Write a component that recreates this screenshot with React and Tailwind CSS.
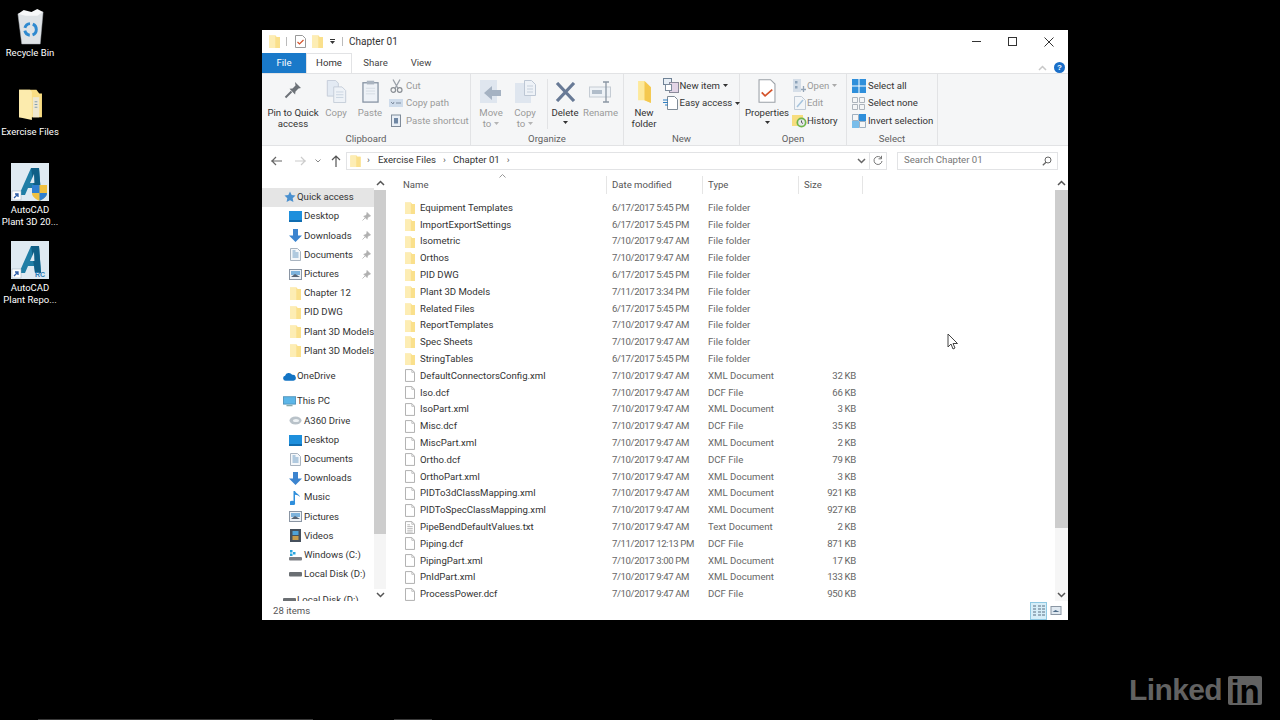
import React from "react";

const Folder = ({ s = 11, h = 13 }) => (
  <svg width={s} height={h} viewBox="0 0 11 13" className="shrink-0">
    <path d="M0 0.5h6.5l1 1.5H11v11H0z" fill="#fbe291" />
    <path d="M0 0.5h6.5V13H0z" fill="#fdedb4" />
    <path d="M6.5 0.5l1 1.5H11v11H6.5z" fill="#fae08c" />
  </svg>
);

const FileIc = ({ lines }) => (
  <svg width="10" height="13" viewBox="0 0 11 14" className="shrink-0">
    <path d="M0.5 0.5h7l3 3v10h-10z" fill="#fff" stroke="#a8a8a8" />
    <path d="M7.5 0.5v3h3" fill="none" stroke="#bbb" />
    {lines && <path d="M2.5 4h3M2.5 6h6M2.5 8h6M2.5 10h6M2.5 12h6" stroke="#b5b5b5" />}
  </svg>
);

const Pin = () => (
  <svg width="9" height="9" viewBox="0 0 9 9" className="shrink-0">
    <path d="M5 0.5l3.5 3.5-1.5.4-1.6 1.6-.3 1.5L1.8 4.2l1.5-.3L4.9 2.3z M3 6l-2.5 2.5" fill="#b0b0b0" stroke="#b0b0b0" strokeWidth="0.8" />
  </svg>
);

const navIcons = {
  star: (
    <svg width="12" height="12" viewBox="0 0 13 13"><path d="M6.5.5l1.8 3.9 4.2.5-3.1 2.9.8 4.2-3.7-2.1-3.7 2.1.8-4.2L.5 4.9l4.2-.5z" fill="#4a90cf" /></svg>
  ),
  desktop: (
    <svg width="13" height="11" viewBox="0 0 13 11"><rect width="13" height="9.5" fill="#1e8fdc" /><rect y="9" width="13" height="2" fill="#0f6cb0" /></svg>
  ),
  down: (
    <svg width="13" height="13" viewBox="0 0 13 13"><path d="M4 0h5v6.5h4L6.5 13 0 6.5h4z" fill="#3c84cf" /></svg>
  ),
  docs: (
    <svg width="11" height="13" viewBox="0 0 11 13"><path d="M.5.5h7l3 3v9H.5z" fill="#f4f7fa" stroke="#a9b4c0" /><path d="M2.5 3h3M2.5 5h6M2.5 7h6M2.5 9h6" stroke="#6c9cc4" /></svg>
  ),
  pics: (
    <svg width="13" height="11" viewBox="0 0 13 11"><rect x=".5" y=".5" width="12" height="10" fill="#eef2f6" stroke="#8a95a3" /><path d="M2 2h9v4H2z" fill="#7db3dc" /><path d="M2 8l4-3 5 3z" fill="#556373" /></svg>
  ),
  cloud: (
    <svg width="13" height="9" viewBox="0 0 15 10"><path d="M3 10a3 3 0 0 1-.6-5.9A4.5 4.5 0 0 1 10.5 3 3.5 3.5 0 0 1 12 10z" fill="#1374c4" /></svg>
  ),
  pc: (
    <svg width="13" height="11" viewBox="0 0 15 12"><rect x=".5" y=".5" width="14" height="8.5" fill="#5cb6e8" stroke="#4d8fb8" /><rect x="4" y="10" width="7" height="1.5" fill="#8aa" /></svg>
  ),
  a360: (
    <svg width="13" height="9" viewBox="0 0 13 9"><ellipse cx="6.5" cy="4.5" rx="6" ry="4" fill="#b9c2c9" /><ellipse cx="7" cy="4.5" rx="3" ry="1.6" fill="#eef2f5" /></svg>
  ),
  music: (
    <svg width="11" height="14" viewBox="0 0 11 14"><path d="M3.5 0h1.5c.5 2.5 4.5 3 5 6-1.500-1.500-3-2-5-2.200V11.500A3 2.500 0 1 1 3.500 10z" fill="#2f8fdc" /></svg>
  ),
  video: (
    <svg width="11" height="13" viewBox="0 0 11 13"><rect width="11" height="13" fill="#46505c" /><rect x="2.500" y="2" width="6" height="4" fill="#4ea2d8" /><rect x="2.500" y="7" width="6" height="4" fill="#c79b4a" /></svg>
  ),
  win: (
    <svg width="13" height="11" viewBox="0 0 13 11"><rect y="7" width="13" height="3.500" rx="1" fill="#7c7f84" /><rect x="1" width="2.500" height="2.500" fill="#27a5df" /><rect x="4" y="2" width="2.500" height="2.500" fill="#27a5df" /><rect x="1" y="3.500" width="2.500" height="2.500" fill="#27a5df" /></svg>
  ),
  disk: (
    <svg width="13" height="6" viewBox="0 0 13 6"><rect y="1" width="13" height="4.500" rx="1" fill="#6b6f73" /></svg>
  ),
};

function NavRow({ icon, label, pin, top, sel }) {
  return (
    <div className={`flex h-[19.2px] items-center shrink-0 ${top ? "pl-[20px] mt-[6.2px]" : "pl-[25px]"} ${sel ? "bg-[#e5e5e5] !mt-[0.8px]" : ""}`}>
      <div className={`flex items-center justify-center shrink-0 ${top ? "w-[15px]" : "w-[17px]"}`}>{icon}</div>
      <span className="flex-1 whitespace-nowrap text-[#333]">{label}</span>
      {pin && <span className="mr-[3px]"><Pin /></span>}
    </div>
  );
}

const files = [
  ["Equipment Templates", "6/17/2017 5:45 PM", "File folder", "", "f"],
  ["ImportExportSettings", "6/17/2017 5:45 PM", "File folder", "", "f"],
  ["Isometric", "7/10/2017 9:47 AM", "File folder", "", "f"],
  ["Orthos", "7/10/2017 9:47 AM", "File folder", "", "f"],
  ["PID DWG", "6/17/2017 5:45 PM", "File folder", "", "f"],
  ["Plant 3D Models", "7/11/2017 3:34 PM", "File folder", "", "f"],
  ["Related Files", "6/17/2017 5:45 PM", "File folder", "", "f"],
  ["ReportTemplates", "7/10/2017 9:47 AM", "File folder", "", "f"],
  ["Spec Sheets", "7/10/2017 9:47 AM", "File folder", "", "f"],
  ["StringTables", "6/17/2017 5:45 PM", "File folder", "", "f"],
  ["DefaultConnectorsConfig.xml", "7/10/2017 9:47 AM", "XML Document", "32 KB"],
  ["Iso.dcf", "7/10/2017 9:47 AM", "DCF File", "66 KB"],
  ["IsoPart.xml", "7/10/2017 9:47 AM", "XML Document", "3 KB"],
  ["Misc.dcf", "7/10/2017 9:47 AM", "DCF File", "35 KB"],
  ["MiscPart.xml", "7/10/2017 9:47 AM", "XML Document", "2 KB"],
  ["Ortho.dcf", "7/10/2017 9:47 AM", "DCF File", "79 KB"],
  ["OrthoPart.xml", "7/10/2017 9:47 AM", "XML Document", "3 KB"],
  ["PIDTo3dClassMapping.xml", "7/10/2017 9:47 AM", "XML Document", "921 KB"],
  ["PIDToSpecClassMapping.xml", "7/10/2017 9:47 AM", "XML Document", "927 KB"],
  ["PipeBendDefaultValues.txt", "7/10/2017 9:47 AM", "Text Document", "2 KB", "t"],
  ["Piping.dcf", "7/11/2017 12:13 PM", "DCF File", "871 KB"],
  ["PipingPart.xml", "7/10/2017 3:00 PM", "XML Document", "17 KB"],
  ["PnIdPart.xml", "7/10/2017 9:47 AM", "XML Document", "133 KB"],
  ["ProcessPower.dcf", "7/10/2017 9:47 AM", "DCF File", "950 KB"],
];

const Chevron = ({ up, color = "#444" }) => (
  <svg width="9" height="6" viewBox="0 0 9 6">
    <path d={up ? "M1 5l3.500-3.500L8 5" : "M1 1l3.500 3.500L8 1"} fill="none" stroke={color} strokeWidth="1.500" />
  </svg>
);

const Caret = ({ c = "#333" }) => (
  <svg width="5" height="3" viewBox="0 0 5 3" className="inline-block"><path d="M0 0h5L2.500 3z" fill={c} /></svg>
);

function Large({ w, icon, l1, l2, caret, dim, ml }) {
  return (
    <div className={`flex flex-col items-center shrink-0 ${ml || ""}`} style={{ width: w }}>
      <div className="h-[24px] mt-[5px] flex items-end justify-center">{icon}</div>
      <div className={`mt-[5px] leading-[10.500px] text-center whitespace-nowrap ${dim ? "text-[#9a9a9a]" : "text-[#333]"}`}>
        <div>{l1}</div>
        {l2 && <div>{l2}</div>}
        {caret && <div className="leading-[8px]"><Caret /></div>}
      </div>
    </div>
  );
}

function Small({ icon, label, dim, caret, tx = 1.5 }) {
  return (
    <div className={`flex items-center h-[17.500px] whitespace-nowrap ${dim ? "text-[#9a9a9a]" : "text-[#333]"}`}>
      <span className="w-[17px] flex items-center justify-center shrink-0">{icon}</span>
      <span style={{ marginLeft: tx }}>{label}</span>
      {caret && <span className="ml-[3px] flex items-center"><Caret c={dim ? "#aaa" : "#333"} /></span>}
    </div>
  );
}

function Group({ w, label, children }) {
  return (
    <div className="flex flex-col h-full border-r border-[#e2e3e5] shrink-0" style={{ width: w }}>
      <div className="flex flex-1 min-h-0">{children}</div>
      <div className="h-[13px] leading-[13px] text-center text-[#5f5f5f]">{label}</div>
    </div>
  );
}

const SmallCol = ({ children, cls }) => <div className={`flex flex-col pt-[3px] ${cls || ""}`}>{children}</div>;

const DimTo = () => (
  <span className="inline-flex items-center gap-[3px]">to <Caret c="#b5b5b5" /></span>
);

const I = {
  pin: <svg width="18" height="18" viewBox="0 0 18 18" className="mb-[4px]"><path d="M11 1l6 6-2.500.6-3 3-.4 3L5.500 7.800l3-.4 3-3z" fill="#6d7278" /><path d="M7.500 10.500L1.500 16.500" stroke="#6d7278" strokeWidth="2" /></svg>,
  copy: <svg width="21" height="23" viewBox="0 0 21 25"><path d="M.5.5h9l3 3v14H.5z" fill="#e3eaf3" stroke="#c3ccd8" /><path d="M7.500 7.500h9l4 4v13h-13z" fill="#eef2f7" stroke="#c3ccd8" /><path d="M10 13h8M10 16h8M10 19h8" stroke="#c9d3df" /></svg>,
  paste: <svg width="17" height="23" viewBox="0 0 18 25"><rect x=".8" y="3" width="16.400" height="21" fill="#eef2f7" stroke="#8794a3" strokeWidth="1.400" /><rect x="5" y=".8" width="8" height="4" fill="#aab4c0" /><path d="M4 9h10M4 12h10M4 15h10" stroke="#d5dce4" /></svg>,
  cut: <svg width="13" height="14" viewBox="0 0 13 14"><path d="M3 .5l5 9M10 .5l-5 9" stroke="#9aa1a9" strokeWidth="1.300" /><circle cx="3.300" cy="11" r="2.300" fill="none" stroke="#8a8f95" strokeWidth="1.200" /><circle cx="9.700" cy="11" r="2.300" fill="none" stroke="#8a8f95" strokeWidth="1.200" /></svg>,
  copypath: <svg width="14" height="8" viewBox="0 0 14 8"><rect width="14" height="8" fill="#cfdceb" /><path d="M2 3l2 2 1-2M7 4h5" stroke="#7f8da0" strokeWidth="1" fill="none" /></svg>,
  pasteS: <svg width="10" height="13" viewBox="0 0 10 13"><rect x=".5" y="1" width="9" height="11.500" fill="#e9eff6" stroke="#7f8b99" /><rect x="3" y="4" width="4" height="5.500" fill="#6f87a4" /></svg>,
  move: <svg width="22" height="23" viewBox="0 0 22 23"><rect width="17" height="23" fill="#dfe6ef" /><path d="M21 10v6h-9v4l-8-7 8-7v4z" fill="#a5b2c2" /></svg>,
  copyto: <svg width="21" height="23" viewBox="0 0 21 23"><rect y="3" width="16" height="20" fill="#dfe6ef" /><path d="M9.500.5h7l4 4v11h-11z" fill="#eef2f7" stroke="#bdc7d4" /><path d="M12 6h6M12 9h6M12 12h6" stroke="#c6d0dc" /></svg>,
  del: <svg width="21" height="20" viewBox="0 0 21 20" className="mb-[1px]"><path d="M2 1l17 18M19 1L2 19" stroke="#687a96" strokeWidth="3.200" /></svg>,
  rename: <svg width="23" height="22" viewBox="0 0 23 22"><rect x="0.500" y="6" width="21" height="10" fill="#eef2f6" stroke="#c5ccd4" /><rect x="3" y="9" width="10" height="4" fill="#b1bdca" /><path d="M17 1v20M14 1h6M14 21h6" stroke="#8a96a4" strokeWidth="1.300" /></svg>,
  newf: <svg width="15" height="23" viewBox="0 0 16 25"><path d="M1 1h7l7 7v17l-7-3H1z" fill="#fde99c" /><path d="M8 1l7 7v17l-7-3z" fill="#f4c84f" /></svg>,
  newitem: <svg width="16" height="15" viewBox="0 0 16 15"><rect x=".5" y=".5" width="8" height="6" fill="#e8eff6" stroke="#6f8296" /><rect x="6.500" y="4.500" width="9" height="10" fill="#e2d4e6" stroke="#8a8a9a" /><rect x="2.500" y="6.500" width="6" height="6" fill="#fff" stroke="#7d8d9d" /></svg>,
  easy: <svg width="15" height="14" viewBox="0 0 15 14"><path d="M4.500.5h7l3 3v10h-10z" fill="#fff" stroke="#7f8b96" /><path d="M0 4h5M0 6.500h5M2 9h3" stroke="#2f7fc1" strokeWidth="1.200" /></svg>,
  props: <svg width="18" height="24" viewBox="0 0 18 25"><path d="M.7.7h12l4.600 4.600v19H.7z" fill="#fff" stroke="#9aa0a6" strokeWidth="1.100" /><path d="M3.500 14l3.500 3.500 7.500-6.500" fill="none" stroke="#d4532b" strokeWidth="1.800" /></svg>,
  open: <svg width="13" height="13" viewBox="0 0 13 13"><rect x="0" y="0" width="8" height="13" fill="#d5dee8" /><rect x="2" y="2" width="2.500" height="2.500" fill="#8ea4ba" /><rect x="2" y="7" width="2.500" height="2.500" fill="#8ea4ba" /><path d="M10.500 7v6M8 10.500h5" stroke="#93a4b6" strokeWidth="1.300" /></svg>,
  edit: <svg width="12" height="14" viewBox="0 0 12 14"><path d="M.5.5h7l4 4v9h-11z" fill="#f2f5f8" stroke="#c0cad5" /><path d="M3 11l6-7" stroke="#a6c4dd" strokeWidth="1.500" /></svg>,
  history: <svg width="15" height="14" viewBox="0 0 15 14"><rect y="1" width="11" height="11" fill="#f7dd7e" /><circle cx="9.500" cy="8.500" r="5" fill="#6fb54c" /><circle cx="9.500" cy="8.500" r="3.300" fill="#e4e7ea" /><path d="M9.500 6.500v2l1.500 1" stroke="#555" fill="none" /></svg>,
  selall: <svg width="14" height="14" viewBox="0 0 14 14"><rect width="14" height="14" fill="#2f8fdb" /><path d="M7 0v14M0 7h14" stroke="#fff" strokeWidth="1" /></svg>,
  selnone: <svg width="13" height="13" viewBox="0 0 13 13"><path d="M.5.5h5v5h-5zM7.500.5h5v5h-5zM.5 7.500h5v5h-5zM7.500 7.500h5v5h-5z" fill="none" stroke="#adb4bc" /></svg>,
  invert: <svg width="14" height="14" viewBox="0 0 14 14"><path d="M.5.5h6v6h-6zM7.500 7.500h6v6h-6z" fill="none" stroke="#9fb0c0" /><rect x="7" width="7" height="7" fill="#2f8fdb" /><rect y="7" width="7" height="7" fill="#79bdea" /></svg>,
};

const Tab = ({ label, w, active }) => (
  <div
    className={`flex items-center justify-center h-[20px] shrink-0 ${active ? "border-x border-t border-[#e2e3e5] text-[#333] relative z-10 bg-white" : "text-[#444]"}`}
    style={{ width: w }}
  >
    {label}
  </div>
);

function DeskIcon({ top, label, children }) {
  return (
    <div className="absolute left-0 w-[60px] flex flex-col items-center text-center text-white text-[9.500px] leading-[12px]" style={{ top }}>
      {children}
      {label.map((t) => (
        <span key={t} className="whitespace-nowrap">{t}</span>
      ))}
    </div>
  );
}

const AcadIcon = ({ rc }) => (
  <svg width="38" height="38" viewBox="0 0 38 38">
    <rect width="38" height="38" fill="#dfeaf2" />
    <path d="M8 32 L20 5 H28 L30 32 H24 L23.500 25 H17 L14 32z" fill="#1f7ea6" />
    <path d="M20 5 H28 L30 32 H24z" fill="#0f5f86" />
    <path d="M19 20 L23 11 L23.400 20z" fill="#dfeaf2" />
    <rect x="1" y="28" width="9" height="9" fill="#fff" stroke="#9ab" strokeWidth=".5" />
    <path d="M3 35l4-4M4 31h3v3" stroke="#2f5fa8" strokeWidth="1.300" fill="none" />
    {rc ? (
      <text x="24" y="36" fontSize="7" fontWeight="700" fill="#2f7fb8" fontFamily="Liberation Sans, sans-serif">RC</text>
    ) : (
      <g>
        <path d="M21 22h15v8c0 4-4 6-7.500 8C25 36 21 34 21 30z" fill="#f0c040" />
        <path d="M21 22h7.500v8H21z" fill="#2f7fd0" />
        <path d="M28.500 30H36c0 4-4 6-7.500 8z" fill="#2f7fd0" />
      </g>
    )}
  </svg>
);

export default function App() {
  return (
    <div className="relative w-[1280px] h-[720px] overflow-hidden bg-black text-[9.600px]" style={{ fontFamily: 'Roboto, sans-serif' }}>
      <DeskIcon top={8} label={["Recycle Bin"]}>
        <svg width="31" height="38" viewBox="0 0 32 39" className="mb-[1px]">
          <path d="M3 6l26-2-3 33H7z" fill="#dfe3e6" stroke="#aeb5ba" strokeWidth=".5" />
          <path d="M3 6L9 2l8 2 6-3 6 3-6 4-12 0z" fill="#f7f8f9" />
          <circle cx="16" cy="22" r="6" fill="none" stroke="#2f8ad0" strokeWidth="3" strokeDasharray="7 3" />
        </svg>
      </DeskIcon>
      <DeskIcon top={88} label={["Exercise Files"]}>
        <svg width="25" height="33" viewBox="0 0 27 36" className="mb-[5px]">
          <path d="M1 2h19l3 4h3v26H1z" fill="#f9dd83" />
          <path d="M1 2h12l2 2v31l-14-3z" fill="#fcebad" />
          <rect x="16" y="10" width="7" height="22" fill="#eee7cf" />
          <path d="M18 15h3M18 18h3M18 21h3" stroke="#7b98ad" />
        </svg>
      </DeskIcon>
      <DeskIcon top={163} label={["AutoCAD", "Plant 3D 20..."]}>
        <AcadIcon />
        <span className="h-[3px]" />
      </DeskIcon>
      <DeskIcon top={241} label={["AutoCAD", "Plant Repo..."]}>
        <AcadIcon rc />
        <span className="h-[3px]" />
      </DeskIcon>

      {/* Window */}
      <div className="absolute left-[262px] top-[30px] w-[806px] h-[590px] bg-white flex flex-col text-[#333]">
        {/* Title bar */}
        <div className="flex items-center h-[23px] shrink-0 pl-[7px]">
          <Folder s={11} h={13} />
          <span className="ml-[6px] w-px h-[9px] bg-[#bbb]" />
          <span className="ml-[8px]"><svg width="11" height="13" viewBox="0 0 11 13"><path d="M.5.5h7l3 3v9h-10z" fill="#fff" stroke="#999" /><path d="M2.500 7l2 2 4-4" stroke="#d4532b" strokeWidth="1.200" fill="none" /></svg></span>
          <span className="ml-[6px]"><Folder s={11} h={13} /></span>
          <span className="ml-[7px] flex flex-col items-center gap-[1px]"><span className="w-[5px] h-px bg-[#333]" /><Caret /></span>
          <span className="ml-[7px] w-px h-[9px] bg-[#bbb]" />
          <span className="ml-[6px] text-[#333] text-[10px]">Chapter 01</span>
          <div className="ml-auto flex items-center text-[#333]">
            <span className="w-[9px] h-px bg-[#333] mr-[27px]" />
            <span className="w-[9px] h-[9px] border border-[#333] mr-[27px]" />
            <svg width="10" height="10" viewBox="0 0 10 10" className="mr-[14px]"><path d="M.5.5l9 9M9.500.5l-9 9" stroke="#333" strokeWidth="1" /></svg>
          </div>
        </div>
        {/* Tabs */}
        <div className="flex items-end h-[20px] shrink-0 relative">
          <div className="w-[44px] h-[20px] bg-[#1979c9] text-white flex items-center justify-center shrink-0">File</div>
          <Tab label="Home" w={46} active />
          <Tab label="Share" w={47} />
          <Tab label="View" w={44} />
          <div className="ml-auto flex items-center mr-[3px] gap-[7px]">
            <Chevron up color="#c8c8c8" />
            <span className="w-[11px] h-[11px] rounded-full bg-[#1a6fc9] text-white text-[8px] font-bold leading-[11px] text-center" style={{ fontFamily: '"Liberation Sans", sans-serif' }}>?</span>
          </div>
        </div>
        {/* Ribbon */}
        <div className="flex h-[73px] shrink-0 bg-[#f5f6f7] border-t border-b border-[#e2e3e5]">
          <Group w={209} label="Clipboard">
            <Large w={62} icon={I.pin} l1="Pin to Quick" l2="access" />
            <Large w={26} icon={I.copy} l1="Copy" dim ml="ml-[-1px]" />
            <Large w={30} icon={I.paste} l1="Paste" dim ml="ml-[6px]" />
            <SmallCol cls="ml-[2.500px]">
              <Small icon={I.cut} label="Cut" dim />
              <Small icon={I.copypath} label="Copy path" dim />
              <Small icon={I.pasteS} label="Paste shortcut" dim />
            </SmallCol>
          </Group>
          <Group w={153} label="Organize">
            <Large w={34} icon={I.move} l1="Move" l2={<DimTo />} dim ml="ml-[3px]" />
            <Large w={34} icon={I.copyto} l1="Copy" l2={<DimTo />} dim />
            <span className="w-px h-[50px] mt-[5px] ml-[5px] bg-[#e2e3e5]" />
            <Large w={38} icon={I.del} l1="Delete" caret ml="ml-[-2px]" />
            <Large w={33} icon={I.rename} l1="Rename" dim />
          </Group>
          <Group w={116} label="New">
            <Large w={40} icon={I.newf} l1="New" l2="folder" />
            <SmallCol cls="ml-[-2px]">
              <Small icon={I.newitem} label="New item" caret tx={0.5} />
              <Small icon={I.easy} label="Easy access" caret tx={0.5} />
            </SmallCol>
          </Group>
          <Group w={107} label="Open">
            <Large w={48} icon={I.props} l1="Properties" caret ml="ml-[3px]" />
            <SmallCol>
              <Small icon={I.open} label="Open" dim caret tx={-1} />
              <Small icon={I.edit} label="Edit" dim tx={-1} />
              <Small icon={I.history} label="History" tx={-1} />
            </SmallCol>
          </Group>
          <Group w={91} label="Select">
            <SmallCol cls="ml-[3px]">
              <Small icon={I.selall} label="Select all" tx={1} />
              <Small icon={I.selnone} label="Select none" tx={1} />
              <Small icon={I.invert} label="Invert selection" tx={1} />
            </SmallCol>
          </Group>
        </div>
        {/* Address bar */}
        <div className="flex items-center h-[29px] shrink-0 pl-[9px]">
          <svg width="12" height="10" viewBox="0 0 12 10"><path d="M0 5h11M5 1L1 5l4 4" fill="none" stroke="#666" strokeWidth="1.200" /></svg>
          <svg width="12" height="10" viewBox="0 0 12 10" className="ml-[11px]"><path d="M12 5H1M7 1l4 4-4 4" fill="none" stroke="#ccc" strokeWidth="1.200" /></svg>
          <svg width="6" height="4" viewBox="0 0 6 4" className="ml-[9px]"><path d="M.5.5L3 3 5.500.5" fill="none" stroke="#888" /></svg>
          <svg width="10" height="12" viewBox="0 0 10 12" className="ml-[10px]"><path d="M5 12V1M1 5l4-4 4 4" fill="none" stroke="#555" strokeWidth="1.200" /></svg>
          <div className="ml-[5px] w-[524px] h-[18px] border border-[#e2e3e5] flex items-center pl-[3px] text-[#333]">
            <Folder s={11} h={12} />
            <span className="ml-[6px] text-[#555]">›</span>
            <span className="ml-[8px]">Exercise Files</span>
            <span className="ml-[7px] text-[#555]">›</span>
            <span className="ml-[7px]">Chapter 01</span>
            <span className="ml-[7px] text-[#555]">›</span>
            <span className="ml-auto mr-[3px]"><Chevron color="#666" /></span>
          </div>
          <div className="w-[17px] h-[18px] border-y border-r border-[#e2e3e5] flex items-center justify-center">
            <svg width="10" height="11" viewBox="0 0 10 11"><path d="M8.500 3.500A4 4 0 1 0 9 6M8.500.8v3H5.500" fill="none" stroke="#777" /></svg>
          </div>
          <div className="ml-[10px] w-[161px] h-[18px] border border-[#e2e3e5] flex items-center pl-[6px] text-[#777]">
            Search Chapter 01
            <svg width="10" height="10" viewBox="0 0 10 10" className="ml-auto mr-[5px]"><circle cx="6" cy="4" r="3" fill="none" stroke="#666" /><path d="M4 6.200L.8 9.200" stroke="#666" strokeWidth="1.300" /></svg>
          </div>
        </div>
        {/* Main */}
        <div className="flex flex-1 min-h-0">
          {/* Nav */}
          <div className="w-[112px] shrink-0 flex flex-col overflow-hidden pt-[12px] h-[426px]">
            <NavRow top sel icon={navIcons.star} label="Quick access" />
            <NavRow icon={navIcons.desktop} label="Desktop" pin />
            <NavRow icon={navIcons.down} label="Downloads" pin />
            <NavRow icon={navIcons.docs} label="Documents" pin />
            <NavRow icon={navIcons.pics} label="Pictures" pin />
            <NavRow icon={<Folder s={11} h={13} />} label="Chapter 12" />
            <NavRow icon={<Folder s={11} h={13} />} label="PID DWG" />
            <NavRow icon={<Folder s={11} h={13} />} label="Plant 3D Models" />
            <NavRow icon={<Folder s={11} h={13} />} label="Plant 3D Models" />
            <NavRow top icon={navIcons.cloud} label="OneDrive" />
            <NavRow top icon={navIcons.pc} label="This PC" />
            <NavRow icon={navIcons.a360} label="A360 Drive" />
            <NavRow icon={navIcons.desktop} label="Desktop" />
            <NavRow icon={navIcons.docs} label="Documents" />
            <NavRow icon={navIcons.down} label="Downloads" />
            <NavRow icon={navIcons.music} label="Music" />
            <NavRow icon={navIcons.pics} label="Pictures" />
            <NavRow icon={navIcons.video} label="Videos" />
            <NavRow icon={navIcons.win} label="Windows (C:)" />
            <NavRow icon={navIcons.disk} label="Local Disk (D:)" />
            <NavRow top icon={navIcons.disk} label="Local Disk (D:)" />
          </div>
          {/* Nav scrollbar */}
          <div className="w-[12px] h-[426px] shrink-0 flex flex-col items-center bg-[#f5f5f5]">
            <div className="h-[15px] w-full flex items-center justify-center bg-white"><Chevron up color="#555" /></div>
            <div className="w-full h-[344px] bg-[#cdcdcd]" />
            <div className="mt-auto h-[12px] w-full flex items-center justify-center bg-white"><Chevron color="#555" /></div>
          </div>
          {/* List */}
          <div className="flex-1 min-w-0 flex flex-col h-[426px] relative">
            <div className="flex h-[24px] items-center text-[#555] pl-[17px] shrink-0 mt-[-2px] relative">
              <span className="w-[204px] border-r border-[#e5e5e5] h-[18px] leading-[18px]">Name</span>
              <span className="w-[96px] pl-[5px] border-r border-[#e5e5e5] h-[18px] leading-[18px]">Date modified</span>
              <span className="w-[96px] pl-[5px] border-r border-[#e5e5e5] h-[18px] leading-[18px]">Type</span>
              <span className="w-[64px] pl-[5px] border-r border-[#e5e5e5] h-[18px] leading-[18px]">Size</span>
              <svg width="7" height="4" viewBox="0 0 7 4" className="absolute left-[113px] top-[1px]"><path d="M.5 3.500L3.500 .5l3 3" fill="none" stroke="#999" /></svg>
            </div>
            <div className="flex flex-col pt-[2.600px] text-[#333] overflow-hidden">
              {files.map((f) => (
                <div key={f[0]} className="flex items-center h-[16.800px] shrink-0 pl-[19px]">
                  <span className="w-[15px] flex justify-start shrink-0">
                    {f[4] === "f" ? <Folder s={10} h={12} /> : <FileIc lines={f[4] === "t"} />}
                  </span>
                  <span className="w-[192px] whitespace-nowrap">{f[0]}</span>
                  <span className="w-[96px] text-[#666] whitespace-nowrap tracking-[-0.380px]">{f[1]}</span>
                  <span className="w-[96px] text-[#666] whitespace-nowrap">{f[2]}</span>
                  <span className="w-[52px] text-right text-[#666] whitespace-nowrap tracking-[-0.300px]">{f[3]}</span>
                </div>
              ))}
            </div>
          </div>
          {/* List scrollbar */}
          <div className="w-[13px] h-[426px] shrink-0 flex flex-col items-center bg-[#f6f6f6]">
            <div className="h-[15px] w-full flex items-center justify-center bg-white"><Chevron up color="#555" /></div>
            <div className="w-full h-[338px] bg-[#cdcdcd]" />
            <div className="mt-auto h-[12px] w-full flex items-center justify-center"><Chevron color="#555" /></div>
          </div>
        </div>
        {/* Status */}
        <div className="flex items-center h-[19px] shrink-0 pl-[11px] pt-[2px] text-[#555] relative">
          28 items
          <div className="ml-auto flex items-center mr-[6px] mt-[-2px]">
            <div className="w-[17px] h-[18px] border border-[#8fc9e3] bg-[#d6eef8] flex items-center justify-center">
              <svg width="12" height="12" viewBox="0 0 12 12"><path d="M0 1h3M0 4h3M0 7h3M0 10h3M5 1h7M5 4h7M5 7h7M5 10h7" stroke="#5a6f82" strokeWidth="1.200" strokeDasharray="3 1" /></svg>
            </div>
            <svg width="12" height="9" viewBox="0 0 11 9" className="ml-[3px]"><rect x=".5" y=".5" width="10" height="8" fill="#dfe8f0" stroke="#8a96a3" /><path d="M2 6l3-2 4 2z" fill="#4e6c88" /></svg>
          </div>
        </div>
      </div>

      {/* Cursor */}
      <svg width="12" height="17" viewBox="0 0 12 17" className="absolute left-[946.500px] top-[333px]">
        <path d="M1 1v13l3-3 2 5 2-1-2-4.500h4.500z" fill="#fff" stroke="#444" strokeWidth="1" />
      </svg>

      {/* Bottom strips */}
      <div className="absolute left-[38px] top-[719px] w-[275px] h-[1px] bg-[#3a3a3a]" />
      <div className="absolute left-[394px] top-[719px] w-[38px] h-[1px] bg-[#3a3a3a]" />

      {/* LinkedIn watermark */}
      <div className="absolute left-[1129px] top-[675px] flex items-center text-[#626262] font-bold" style={{ fontFamily: '"Liberation Sans", sans-serif' }}>
        <span className="text-[30px] leading-[30px] tracking-[-0.600px]">Linked</span>
        <span className="ml-[6px] w-[34px] h-[29px] bg-[#626262] text-black rounded-[2px] text-[33px] leading-[31px] text-center">in</span>
      </div>
    </div>
  );
}
